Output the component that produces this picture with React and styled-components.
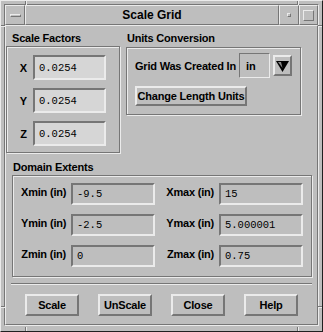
import React from 'react'
import styled, { createGlobalStyle } from 'styled-components'

const BG = '#bebebe'
const LIGHT = '#ebebeb'
const DARK = '#767676'

const GlobalStyle = createGlobalStyle`
  html, body {
    margin: 0;
    padding: 0;
    background: ${BG};
  }
  body {
    font-family: "Liberation Sans", Arial, sans-serif;
    color: #000;
  }
`

const Window = styled.div`
  position: relative;
  box-sizing: border-box;
  width: 323px;
  height: 332px;
  background: ${BG};
  border: 1px solid;
  border-color: ${LIGHT} #202020 #202020 ${LIGHT};
  padding: 3px 3px 5px 3px;
  display: flex;
  flex-direction: column;
`

const Inner = styled.div`
  flex: 1;
  display: flex;
  flex-direction: column;
  border: 1px solid;
  border-color: ${DARK} ${LIGHT} ${LIGHT} ${DARK};
`

// little notches cut into the window border at the corners
const Tick = styled.span`
  position: absolute;
  background: ${DARK};
  box-shadow: ${p => (p.$v ? `1px 0 0 ${LIGHT}` : `0 1px 0 ${LIGHT}`)};
  width: ${p => (p.$v ? '1px' : '4px')};
  height: ${p => (p.$v ? '4px' : '1px')};
  left: ${p => p.$x}px;
  top: ${p => p.$y}px;
`

const TitleBar = styled.div`
  display: flex;
  height: 20px;
`

const TitleCell = styled.div`
  box-sizing: border-box;
  width: ${p => (p.$w ? `${p.$w}px` : 'auto')};
  flex: ${p => (p.$w ? 'none' : '1')};
  border: 1px solid;
  border-color: ${LIGHT} ${DARK} ${DARK} ${LIGHT};
  display: flex;
  align-items: center;
  justify-content: center;
  font-size: 12px;
  font-weight: bold;
`

const Glyph = styled.span`
  box-sizing: border-box;
  width: ${p => p.$w}px;
  height: ${p => p.$h}px;
  border: 1px solid;
  border-color: ${LIGHT} ${DARK} ${DARK} ${LIGHT};
`

const Body = styled.div`
  flex: 1;
  border: 1px solid;
  border-color: ${LIGHT} ${DARK} ${DARK} ${LIGHT};
  display: flex;
  flex-direction: column;
`

const TopRow = styled.div`
  display: flex;
  align-items: flex-start;
`

const Group = styled.div`
  width: ${p => p.$w}px;
  margin-left: ${p => p.$ml || 0}px;
`

const GroupLabel = styled.div`
  font-size: 11px;
  font-weight: bold;
  letter-spacing: -0.2px;
  line-height: 14px;
  margin-top: ${p => p.$mt}px;
  margin-bottom: ${p => p.$mb}px;
  padding-left: ${p => p.$pl}px;
`

const Frame = styled.div`
  box-sizing: border-box;
  height: ${p => p.$h}px;
  width: ${p => (p.$w ? `${p.$w}px` : 'auto')};
  margin-left: ${p => p.$ml || 0}px;
  border: 1px solid ${DARK};
  box-shadow: inset 1px 1px 0 ${LIGHT}, 1px 1px 0 ${LIGHT};
  display: flex;
  flex-direction: column;
`

const ScaleRows = styled.div`
  display: flex;
  flex-direction: column;
  gap: 8px;
  padding-top: 8px;
`

const ScaleRow = styled.div`
  display: flex;
  align-items: center;
`

const AxisLabel = styled.span`
  width: 20px;
  margin-right: 6px;
  text-align: right;
  font-size: 11px;
  font-weight: bold;
`

const Field = styled.div`
  box-sizing: border-box;
  width: ${p => p.$w}px;
  height: ${p => p.$h}px;
  background: ${p => (p.$editable ? '#d6d6d6' : BG)};
  border-style: solid;
  border-width: 2px;
  border-color: ${DARK} ${LIGHT} ${LIGHT} ${DARK};
  display: flex;
  align-items: center;
  padding-left: 4px;
  font-family: "Liberation Mono", "Courier New", monospace;
  font-size: 10.5px;
`

const UnitsBody = styled.div`
  display: flex;
  flex-direction: column;
  align-items: flex-start;
  padding: 5px 0 0 8px;
`

const UnitsRow = styled.div`
  display: flex;
  align-items: center;
`

const BoldText = styled.span`
  font-size: 11px;
  font-weight: bold;
  letter-spacing: -0.2px;
  margin-right: ${p => p.$mr || 0}px;
`

const UnitBox = styled.div`
  box-sizing: border-box;
  width: 31px;
  height: 25px;
  border: 1px solid;
  border-color: ${DARK} ${LIGHT} ${LIGHT} ${DARK};
  display: flex;
  align-items: center;
  padding-left: 6px;
  font-size: 11px;
  font-weight: bold;
  margin-right: 3px;
`

const Button = styled.button`
  box-sizing: border-box;
  width: ${p => p.$w}px;
  height: ${p => p.$h}px;
  margin: 0;
  margin-top: ${p => p.$mt || 0}px;
  padding: 0;
  background: ${BG};
  border-style: solid;
  border-width: 2px;
  border-color: ${LIGHT} ${DARK} ${DARK} ${LIGHT};
  font-family: "Liberation Sans", Arial, sans-serif;
  font-size: 11px;
  font-weight: bold;
  letter-spacing: -0.2px;
  color: #000;
  display: flex;
  align-items: center;
  justify-content: center;
`

const DomainRows = styled.div`
  display: flex;
  flex-direction: column;
  gap: 9px;
  padding-top: 7px;
`

const DomainRow = styled.div`
  display: flex;
  align-items: flex-start;
  padding-left: 8px;
`

const ExtentLabel = styled.span`
  width: ${p => p.$w}px;
  margin-left: ${p => p.$ml || 0}px;
  margin-right: 5px;
  padding-top: 2px;
  line-height: 14px;
  text-align: right;
  white-space: nowrap;
  font-size: 11px;
  font-weight: bold;
  letter-spacing: -0.2px;
`

const Separator = styled.div`
  margin: 6px 0 0 5px;
  width: 301px;
  border-top: 1px solid ${DARK};
  border-bottom: 1px solid ${LIGHT};
`

const ButtonRow = styled.div`
  display: flex;
  gap: 19px;
  margin-top: 9px;
  padding-left: 19px;
`

const DownArrow = () => (
  <svg width="13" height="12" viewBox="0 0 13 12">
    <polygon points="0,1 13,1 6.5,12" fill="#000" />
    <polygon points="2,2 5,2 6.5,8" fill="#8a8a8a" />
  </svg>
)

const scale = [['X', '0.0254'], ['Y', '0.0254'], ['Z', '0.0254']]

const extents = [
  ['Xmin (in)', '-9.5', 'Xmax (in)', '15'],
  ['Ymin (in)', '-2.5', 'Ymax (in)', '5.000001'],
  ['Zmin (in)', '0', 'Zmax (in)', '0.75'],
]

export default function App() {
  return (
    <>
      <GlobalStyle />
      <Window>
        <Tick $v $x={24} $y={0} />
        <Tick $v $x={296} $y={0} />
        <Tick $v $x={24} $y={326} />
        <Tick $v $x={296} $y={326} />
        <Tick $x={0} $y={24} />
        <Tick $x={317} $y={24} />
        <Tick $x={0} $y={305} />
        <Tick $x={317} $y={305} />
        <Inner>
          <TitleBar>
            <TitleCell $w={20}><Glyph $w={11} $h={3} /></TitleCell>
            <TitleCell>Scale Grid</TitleCell>
            <TitleCell $w={20}><Glyph $w={4} $h={4} /></TitleCell>
            <TitleCell $w={19}><Glyph $w={11} $h={11} /></TitleCell>
          </TitleBar>
          <Body>
            <TopRow>
              <Group $w={114}>
                <GroupLabel $mt={5} $mb={1} $pl={6}>Scale Factors</GroupLabel>
                <Frame $h={107}>
                  <ScaleRows>
                    {scale.map(([axis, v]) => (
                      <ScaleRow key={axis}>
                        <AxisLabel>{axis}</AxisLabel>
                        <Field $editable $w={73} $h={25}>{v}</Field>
                      </ScaleRow>
                    ))}
                  </ScaleRows>
                </Frame>
              </Group>
              <Group $w={175} $ml={6}>
                <GroupLabel $mt={5} $mb={2} $pl={1}>Units Conversion</GroupLabel>
                <Frame $h={68}>
                  <UnitsBody>
                    <UnitsRow>
                      <BoldText $mr={3}>Grid Was Created In</BoldText>
                      <UnitBox>in</UnitBox>
                      <Button $w={19} $h={21}><DownArrow /></Button>
                    </UnitsRow>
                    <Button $w={112} $h={20} $mt={8}>Change Length Units</Button>
                  </UnitsBody>
                </Frame>
              </Group>
            </TopRow>

            <GroupLabel $mt={7} $mb={1} $pl={7}>Domain Extents</GroupLabel>
            <Frame $h={102} $w={300} $ml={6}>
              <DomainRows>
                {extents.map(([l1, v1, l2, v2]) => (
                  <DomainRow key={l1}>
                    <ExtentLabel $w={45}>{l1}</ExtentLabel>
                    <Field $w={84} $h={22}>{v1}</Field>
                    <ExtentLabel $w={49} $ml={10}>{l2}</ExtentLabel>
                    <Field $w={84} $h={22}>{v2}</Field>
                  </DomainRow>
                ))}
              </DomainRows>
            </Frame>

            <Separator />

            <ButtonRow>
              <Button $w={54} $h={22}>Scale</Button>
              <Button $w={54} $h={22}>UnScale</Button>
              <Button $w={54} $h={22}>Close</Button>
              <Button $w={54} $h={22}>Help</Button>
            </ButtonRow>
          </Body>
        </Inner>
      </Window>
    </>
  )
}
